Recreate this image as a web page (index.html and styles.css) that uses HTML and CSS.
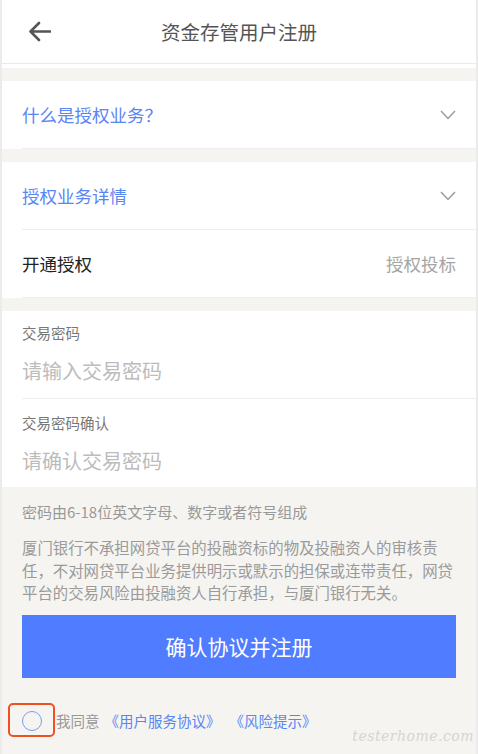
FILE: index.html
```html
<!DOCTYPE html>
<html lang="zh-CN">

<head>
    <meta charset="UTF-8">
    <meta name="viewport" content="width=device-width, initial-scale=1.0">
    <title>资金存管用户注册</title>
    <link rel="stylesheet" href="styles.css">
</head>

<body>
    <div class="page">
        <header class="topbar">
            <div class="topbar-inner">
                <span class="back">
                    <svg width="23" height="21" viewBox="0 0 23 21">
                        <path d="M22 10.5H2.5M11 2L2.5 10.5L11 19" fill="none" stroke="#555" stroke-width="2.6" stroke-linecap="round" stroke-linejoin="round" />
                    </svg>
                </span>
                <h1 class="title">资金存管用户注册</h1>
                <span></span>
            </div>
        </header>

        <section class="card">
            <div class="row">
                <span class="row-link">什么是授权业务？</span>
                <svg class="chevron" width="16" height="10" viewBox="0 0 16 10">
                    <path d="M1 1L8 8.5L15 1" fill="none" stroke="#999" stroke-width="1.4" />
                </svg>
            </div>
        </section>

        <section class="card">
            <div class="row">
                <span class="row-link">授权业务详情</span>
                <svg class="chevron" width="16" height="10" viewBox="0 0 16 10">
                    <path d="M1 1L8 8.5L15 1" fill="none" stroke="#999" stroke-width="1.4" />
                </svg>
            </div>
            <div class="row">
                <span class="row-label">开通授权</span>
                <span class="row-value">授权投标</span>
            </div>
        </section>

        <section class="card form">
            <div class="field">
                <div class="field-label">交易密码</div>
                <input class="field-input" type="password" placeholder="请输入交易密码">
            </div>
            <div class="field">
                <div class="field-label">交易密码确认</div>
                <input class="field-input" type="password" placeholder="请确认交易密码">
            </div>
        </section>

        <div class="notes">
            <p class="hint">密码由6-18位英文字母、数字或者符号组成</p>
            <p class="disclaimer">厦门银行不承担网贷平台的投融资标的物及投融资人的审核责任，不对网贷平台业务提供明示或默示的担保或连带责任，网贷平台的交易风险由投融资人自行承担，与厦门银行无关。</p>
            <button class="submit">确认协议并注册</button>
            <div class="agree">
                <span class="check"></span>
                <span class="mark"></span>
                <span class="agree-text">我同意</span>
                <a class="agree-link">《用户服务协议》</a>
                <a class="agree-link">《风险提示》</a>
            </div>
        </div>

        <div class="watermark">testerhome.com</div>
    </div>
</body>

</html>
```

FILE: styles.css
```css
:root {
    --bg: #f5f4f1;
    --line: #eeeeee;
    --blue: #5a86f3;
    --btn: #507cff;
}

* {
    box-sizing: border-box;
}

body {
    margin: 0;
    background: #ebebeb;
    font-family: "Noto Sans CJK SC", "Noto Sans", sans-serif;
}

.page {
    position: relative;
    width: 474px;
    min-height: 754px;
    margin-left: 2px;
    background: var(--bg);
    overflow: hidden;
}

.topbar {
    background: #fff;
    padding-bottom: 4px;
}

.topbar-inner {
    height: 64px;
    border-bottom: 1px solid #e7eaf2;
    display: grid;
    grid-template-columns: 1fr auto 1fr;
    align-items: center;
}

.back {
    display: flex;
    padding-left: 26px;
}

.title {
    margin: 0;
    font-size: 19.5px;
    font-weight: 400;
    color: #555;
    line-height: 1;
}

.card {
    background: #fff;
    margin-top: 13px;
}

.row {
    height: 68px;
    margin-left: 20px;
    padding-right: 20px;
    border-bottom: 1px solid var(--line);
    display: flex;
    align-items: center;
    justify-content: space-between;
}

.row-link {
    font-size: 17.5px;
    color: var(--blue);
}

.row-label {
    font-size: 17.5px;
    color: #222;
}

.row-value {
    font-size: 17.5px;
    color: #a5a5a5;
}

.form {
    margin-top: 13px;
}

.field {
    margin-left: 20px;
    padding: 13px 0 14px;
    display: flex;
    flex-direction: column;
}

.field + .field {
    border-top: 1px solid var(--line);
    padding: 15px 0 13px;
}

.field-label {
    font-size: 14.5px;
    line-height: 18px;
    color: #777;
}

.field-input {
    margin-top: 14px;
    height: 28px;
    padding: 0;
    border: none;
    outline: none;
    font-family: inherit;
    font-size: 20px;
    color: #333;
    background: transparent;
}

.field-input::placeholder {
    color: #bcbcbc;
}

.notes {
    padding: 15px 20px 0;
}

.hint {
    margin: 0;
    font-size: 15px;
    line-height: 20px;
    color: #999;
}

.disclaimer {
    margin: 14px 0 0;
    font-size: 15.4px;
    line-height: 22.5px;
    color: #9a9a9a;
}

.submit {
    display: block;
    width: 100%;
    height: 63px;
    margin-top: 11px;
    border: none;
    background: var(--btn);
    color: #fff;
    font-family: inherit;
    font-size: 21px;
    cursor: pointer;
}

.agree {
    position: relative;
    margin-top: 33px;
    height: 20px;
    display: flex;
    align-items: center;
    font-size: 14.5px;
}

.check {
    width: 20px;
    height: 20px;
    border: 1.6px solid #7a9cf6;
    border-radius: 50%;
    margin-right: 14px;
}

.mark {
    position: absolute;
    left: -14px;
    top: -8px;
    width: 47px;
    height: 34px;
    border: 2.5px solid #f0501f;
    border-radius: 5px;
}

.agree-text {
    color: #999;
    margin-right: 5px;
}

.agree-link {
    color: var(--blue);
    margin-right: 9px;
}

.watermark {
    position: absolute;
    right: 2px;
    bottom: 10px;
    font-family: "DejaVu Serif", serif;
    font-style: italic;
    font-size: 14px;
    letter-spacing: 0.5px;
    color: #d4d4d4;
}
```
